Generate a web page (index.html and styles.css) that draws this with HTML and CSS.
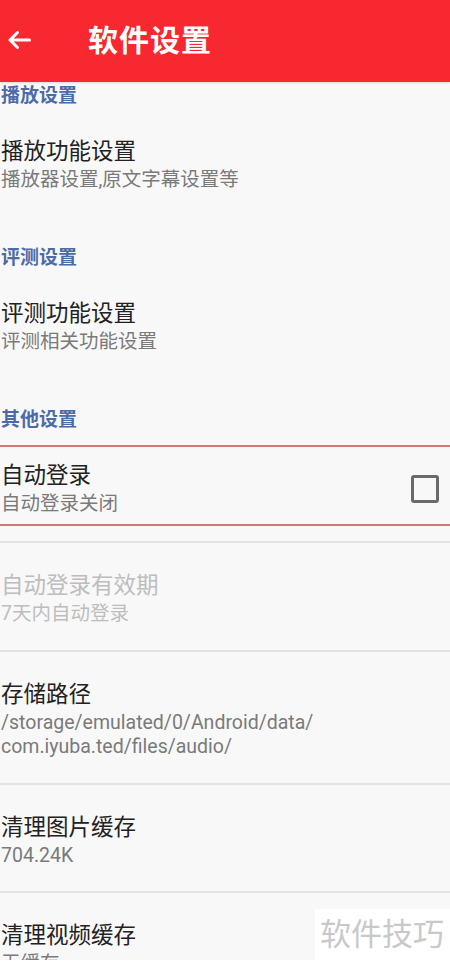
FILE: index.html
```html
<!DOCTYPE html>
<html lang="zh-CN">
<head>
<meta charset="utf-8">
<title>软件设置</title>
<link rel="stylesheet" href="styles.css">
</head>
<body>
<div class="screen">
  <header class="appbar">
    <svg class="back" width="24" height="20" viewBox="0 0 24 20" aria-hidden="true">
      <path d="M22.5 10H3M10.5 2.5L3 10l7.5 7.5" fill="none" stroke="#fff" stroke-width="3" stroke-linecap="round" stroke-linejoin="round"/>
    </svg>
    <h1 class="title">软件设置</h1>
  </header>
  <main class="list">
    <div class="category">播放设置</div>
    <div class="item">
      <div class="item-title">播放功能设置</div>
      <div class="item-sub">播放器设置,原文字幕设置等</div>
    </div>

    <div class="category">评测设置</div>
    <div class="item">
      <div class="item-title">评测功能设置</div>
      <div class="item-sub">评测相关功能设置</div>
    </div>

    <div class="category">其他设置</div>
    <div class="check-wrap">
      <div class="check-item">
        <div class="check-text">
          <div class="item-title">自动登录</div>
          <div class="item-sub">自动登录关闭</div>
        </div>
        <span class="checkbox"></span>
      </div>
    </div>
    <div class="row disabled">
      <div class="item-title">自动登录有效期</div>
      <div class="item-sub">7天内自动登录</div>
    </div>
    <div class="row">
      <div class="item-title">存储路径</div>
      <div class="item-sub">/storage/emulated/0/Android/data/<br>com.iyuba.ted/files/audio/</div>
    </div>
    <div class="row">
      <div class="item-title">清理图片缓存</div>
      <div class="item-sub">704.24K</div>
    </div>
    <div class="row">
      <div class="item-title">清理视频缓存</div>
      <div class="item-sub">无缓存</div>
    </div>
  </main>
  <div class="watermark">软件技巧</div>
</div>
</body>
</html>
```

FILE: styles.css
```css
* { box-sizing: border-box; margin: 0; padding: 0; }
html, body { background: #ffffff; }
body {
  font-family: Roboto, "Noto Sans CJK SC", "Noto Sans", sans-serif;
  width: 450px;
  height: 976px;
  overflow: hidden;
}
.screen {
  position: relative;
  width: 450px;
  height: 976px;
}
.appbar {
  height: 82px;
  background: #f7282f;
  display: flex;
  align-items: center;
  padding-left: 7px;
  box-shadow: 0 1px 2px rgba(0,0,0,0.12);
  position: relative;
  z-index: 1;
}
.back { display: block; margin-top: -2px; }
.title {
  margin-left: 57px;
  color: #ffffff;
  font-size: 30px;
  font-weight: 700;
  line-height: 40px;
  letter-spacing: 1px;
}
.list {
  height: 878px;
  overflow: hidden;
  background: #f8f8f8;
}
.category {
  padding: 4px 0 15px 1px;
  font-size: 19px;
  line-height: 20px;
  font-weight: 700;
  color: #4c6ba8;
}
.item {
  padding: 15px 0 52px 1px;
}
.item-title {
  font-size: 22.5px;
  line-height: 30px;
  color: #222222;
}
.item-sub {
  margin-top: 2px;
  font-size: 19.5px;
  line-height: 24px;
  color: #7a7a7a;
}
.check-wrap {
  padding-bottom: 15px;
}
.check-item {
  display: flex;
  align-items: center;
  justify-content: space-between;
  border-top: 2px solid #d77476;
  border-bottom: 2px solid #d77476;
  padding: 13px 11px 8px 1px;
}
.checkbox {
  width: 28px;
  height: 28px;
  border: 3px solid #6a6a6a;
  border-radius: 3px;
  margin-top: 2px;
}
.row {
  border-top: 2px solid #e2e2e2;
  padding: 27px 0 24px 1px;
}
.row + .row + .row {
  padding-bottom: 23px;
}
.row.disabled .item-title,
.row.disabled .item-sub {
  color: #bdbdbd;
}
.watermark {
  position: absolute;
  left: 315px;
  top: 909px;
  width: 135px;
  height: 51px;
  background: #ffffff;
  color: #c9c9c9;
  font-size: 31px;
  line-height: 51px;
  padding-left: 5px;
  letter-spacing: 0;
}
```
